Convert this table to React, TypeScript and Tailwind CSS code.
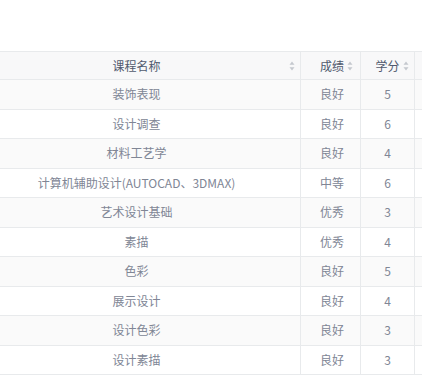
import React from 'react';

interface Course {
  name: string;
  grade: string;
  credit: number;
}

const courses: Course[] = [
  { name: '装饰表现', grade: '良好', credit: 5 },
  { name: '设计调查', grade: '良好', credit: 6 },
  { name: '材料工艺学', grade: '良好', credit: 4 },
  { name: '计算机辅助设计(AUTOCAD、3DMAX)', grade: '中等', credit: 6 },
  { name: '艺术设计基础', grade: '优秀', credit: 3 },
  { name: '素描', grade: '优秀', credit: 4 },
  { name: '色彩', grade: '良好', credit: 5 },
  { name: '展示设计', grade: '良好', credit: 4 },
  { name: '设计色彩', grade: '良好', credit: 3 },
  { name: '设计素描', grade: '良好', credit: 3 },
];

function SortIcon() {
  return (
    <svg width="6" height="10" viewBox="0 0 6 10" className="block">
      <path d="M3 0.5 L5.5 3.8 H0.5 Z" fill="#c5c8ce" />
      <path d="M3 9.5 L5.5 6.2 H0.5 Z" fill="#c5c8ce" />
    </svg>
  );
}

const cols = 'grid grid-cols-[328px_60px_54px_1fr]';

export default function App() {
  return (
    <div
      className="w-[422px] h-[378px] overflow-hidden bg-white pt-[51px]"
      style={{ fontFamily: '"Noto Sans CJK SC", "Noto Sans", sans-serif' }}
    >
      <div className="ml-[-27px] w-[480px] text-[12px]">
        {/* Header */}
        <div className={`${cols} h-[29px] bg-[#f8f8f9] border-t border-b border-[#e8eaec] text-[#515a6e]`}>
          <div className="relative flex items-center justify-center border-r border-[#e8eaec]">
            <span>课程名称</span>
            <span className="absolute right-[5px] top-1/2 -translate-y-1/2">
              <SortIcon />
            </span>
          </div>
          <div className="relative flex items-center justify-center border-r border-[#e8eaec]">
            <span className="relative ml-[3px]">
              成绩
              <span className="absolute left-full ml-[3px] top-1/2 -translate-y-1/2">
                <SortIcon />
              </span>
            </span>
          </div>
          <div className="relative flex items-center justify-center border-r border-[#e8eaec]">
            <span className="relative">
              学分
              <span className="absolute left-full ml-[3px] top-1/2 -translate-y-1/2">
                <SortIcon />
              </span>
            </span>
          </div>
          <div />
        </div>

        {/* Rows */}
        {courses.map((c, i) => (
          <div
            key={c.name}
            className={`${cols} h-[29.5px] border-b border-[#e8eaec] text-[#808695] ${
              i % 2 === 0 ? 'bg-[#fafafa]' : 'bg-white'
            }`}
          >
            <div className="flex items-center justify-center border-r border-[#e8eaec]">{c.name}</div>
            <div className="flex items-center justify-center border-r border-[#e8eaec] pl-[3px]">{c.grade}</div>
            <div className="flex items-center justify-center border-r border-[#e8eaec]">{c.credit}</div>
            <div />
          </div>
        ))}
      </div>
    </div>
  );
}
